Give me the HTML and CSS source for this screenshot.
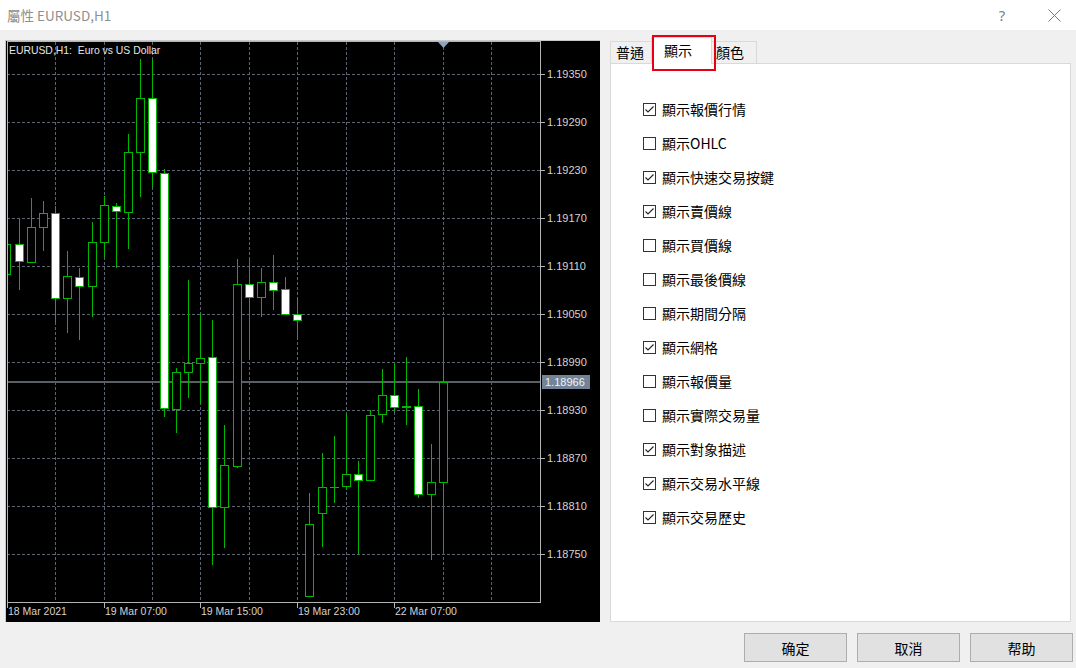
FILE: index.html
```html
<!DOCTYPE html>
<html>
<head>
<meta charset="utf-8">
<title>屬性 EURUSD,H1</title>
<link rel="stylesheet" href="styles.css">
</head>
<body>
<div class="window">
  <div class="titlebar">
    <span class="title">屬性 EURUSD,H1</span>
    <span class="tb-help">?</span>
    <span class="tb-close"><svg width="13" height="13" viewBox="0 0 13 13"><path d="M0.5 0.5L12.5 12.5M12.5 0.5L0.5 12.5" stroke="#777" stroke-width="1" fill="none"/></svg></span>
  </div>
  <div class="content">
    <div class="chart">
      <svg class="chart-svg" width="594" height="581" viewBox="6 41 594 581">
        <defs>
          <clipPath id="plot"><rect x="7" y="41" width="534" height="562"/></clipPath>
        </defs>
        <rect x="6" y="41" width="594" height="581" fill="#000"/>
        <g class="grid">
          <line x1="7" y1="74.5" x2="541" y2="74.5"/>
          <line x1="7" y1="122.5" x2="541" y2="122.5"/>
          <line x1="7" y1="170.5" x2="541" y2="170.5"/>
          <line x1="7" y1="218.5" x2="541" y2="218.5"/>
          <line x1="7" y1="266.5" x2="541" y2="266.5"/>
          <line x1="7" y1="314.5" x2="541" y2="314.5"/>
          <line x1="7" y1="362.5" x2="541" y2="362.5"/>
          <line x1="7" y1="410.5" x2="541" y2="410.5"/>
          <line x1="7" y1="458.5" x2="541" y2="458.5"/>
          <line x1="7" y1="506.5" x2="541" y2="506.5"/>
          <line x1="7" y1="554.5" x2="541" y2="554.5"/>
          <line x1="55.5" y1="42" x2="55.5" y2="603"/>
          <line x1="104.5" y1="42" x2="104.5" y2="603"/>
          <line x1="152.5" y1="42" x2="152.5" y2="603"/>
          <line x1="200.5" y1="42" x2="200.5" y2="603"/>
          <line x1="249.5" y1="42" x2="249.5" y2="603"/>
          <line x1="297.5" y1="42" x2="297.5" y2="603"/>
          <line x1="346.5" y1="42" x2="346.5" y2="603"/>
          <line x1="394.5" y1="42" x2="394.5" y2="603"/>
          <line x1="443.5" y1="42" x2="443.5" y2="603"/>
          <line x1="491.5" y1="42" x2="491.5" y2="603"/>
        </g>
        <rect class="curline" x="7" y="381" width="534" height="2"/>
        <g class="candles" clip-path="url(#plot)">
          <line x1="6.5" y1="216" x2="6.5" y2="274"/><rect class="h" x="2.5" y="244.5" width="8" height="30"/>
          <line x1="19.5" y1="219" x2="19.5" y2="290"/><rect class="w" x="15.5" y="244.5" width="8" height="17"/>
          <line x1="31.5" y1="198" x2="31.5" y2="263"/><rect class="h" x="27.5" y="227.5" width="8" height="35"/>
          <line x1="43.5" y1="201" x2="43.5" y2="251"/><rect class="h" x="39.5" y="213.5" width="8" height="14"/>
          <line x1="55.5" y1="206" x2="55.5" y2="322"/><rect class="w" x="51.5" y="213.5" width="8" height="85"/>
          <line x1="67.5" y1="251" x2="67.5" y2="333"/><rect class="h" x="63.5" y="276.5" width="8" height="22"/>
          <line x1="79.5" y1="268" x2="79.5" y2="340"/><rect class="w" x="75.5" y="277.5" width="8" height="9"/>
          <line x1="92.5" y1="222" x2="92.5" y2="317"/><rect class="h" x="88.5" y="242.5" width="8" height="44"/>
          <line x1="104.5" y1="196" x2="104.5" y2="257"/><rect class="h" x="100.5" y="205.5" width="8" height="37"/>
          <line x1="116.5" y1="203" x2="116.5" y2="268"/><rect class="w" x="112.5" y="206.5" width="8" height="5"/>
          <line x1="128.5" y1="134" x2="128.5" y2="249"/><rect class="h" x="124.5" y="152.5" width="8" height="60"/>
          <line x1="140.5" y1="59" x2="140.5" y2="197"/><rect class="h" x="136.5" y="98.5" width="8" height="54"/>
          <line x1="152.5" y1="59" x2="152.5" y2="188"/><rect class="w" x="148.5" y="98.5" width="8" height="74"/>
          <line x1="164.5" y1="169" x2="164.5" y2="417"/><rect class="w" x="160.5" y="173.5" width="8" height="235"/>
          <line x1="176.5" y1="368" x2="176.5" y2="433"/><rect class="h" x="172.5" y="372.5" width="8" height="37"/>
          <line x1="188.5" y1="280" x2="188.5" y2="398"/><rect class="h" x="184.5" y="363.5" width="8" height="9"/>
          <line x1="200.5" y1="313" x2="200.5" y2="404"/><rect class="h" x="196.5" y="358.5" width="8" height="5"/>
          <line x1="212.5" y1="320" x2="212.5" y2="565"/><rect class="w" x="208.5" y="357.5" width="8" height="150"/>
          <line x1="224.5" y1="425" x2="224.5" y2="548"/><rect class="h" x="220.5" y="465.5" width="8" height="42"/>
          <line x1="237.5" y1="259" x2="237.5" y2="468"/><rect class="h" x="233.5" y="284.5" width="8" height="182"/>
          <line x1="249.5" y1="260" x2="249.5" y2="357"/><rect class="w" x="245.5" y="284.5" width="8" height="13"/>
          <line x1="261.5" y1="268" x2="261.5" y2="317"/><rect class="h" x="257.5" y="282.5" width="8" height="15"/>
          <line x1="273.5" y1="255" x2="273.5" y2="310"/><rect class="w" x="269.5" y="282.5" width="8" height="8"/>
          <line x1="285.5" y1="277" x2="285.5" y2="314"/><rect class="w" x="281.5" y="289.5" width="8" height="25"/>
          <line x1="297.5" y1="297" x2="297.5" y2="340"/><rect class="w" x="293.5" y="314.5" width="8" height="6"/>
          <line x1="309.5" y1="493" x2="309.5" y2="596"/><rect class="h" x="305.5" y="524.5" width="8" height="72"/>
          <line x1="322.5" y1="453" x2="322.5" y2="547"/><rect class="h" x="318.5" y="487.5" width="8" height="26"/>
          <line x1="334.5" y1="436" x2="334.5" y2="503"/><line x1="330" y1="487.5" x2="339" y2="487.5"/>
          <line x1="346.5" y1="414" x2="346.5" y2="490"/><rect class="h" x="342.5" y="474.5" width="8" height="12"/>
          <line x1="358.5" y1="461" x2="358.5" y2="554"/><rect class="w" x="354.5" y="474.5" width="8" height="6"/>
          <line x1="370.5" y1="410" x2="370.5" y2="481"/><rect class="h" x="366.5" y="415.5" width="8" height="65"/>
          <line x1="382.5" y1="369" x2="382.5" y2="423"/><rect class="h" x="378.5" y="395.5" width="8" height="19"/>
          <line x1="394.5" y1="364" x2="394.5" y2="412"/><rect class="w" x="390.5" y="395.5" width="8" height="12"/>
          <line x1="406.5" y1="357" x2="406.5" y2="425"/><rect class="h" x="402.5" y="406.5" width="8" height="1"/>
          <line x1="418.5" y1="389" x2="418.5" y2="498"/><rect class="w" x="414.5" y="406.5" width="8" height="88"/>
          <line x1="431.5" y1="444" x2="431.5" y2="560"/><rect class="h" x="427.5" y="482.5" width="8" height="12"/>
          <line x1="443.5" y1="318" x2="443.5" y2="552"/><rect class="h" x="439.5" y="382.5" width="8" height="100"/>
        </g>
        <rect class="frame" x="7.5" y="41.5" width="533" height="561"/>
        <g class="ticks">
          <line x1="541" y1="74.5" x2="545" y2="74.5"/>
          <line x1="541" y1="122.5" x2="545" y2="122.5"/>
          <line x1="541" y1="170.5" x2="545" y2="170.5"/>
          <line x1="541" y1="218.5" x2="545" y2="218.5"/>
          <line x1="541" y1="266.5" x2="545" y2="266.5"/>
          <line x1="541" y1="314.5" x2="545" y2="314.5"/>
          <line x1="541" y1="362.5" x2="545" y2="362.5"/>
          <line x1="541" y1="410.5" x2="545" y2="410.5"/>
          <line x1="541" y1="458.5" x2="545" y2="458.5"/>
          <line x1="541" y1="506.5" x2="545" y2="506.5"/>
          <line x1="541" y1="554.5" x2="545" y2="554.5"/>
          <line x1="7.5" y1="603" x2="7.5" y2="608"/>
          <line x1="104.5" y1="603" x2="104.5" y2="608"/>
          <line x1="200.5" y1="603" x2="200.5" y2="608"/>
          <line x1="297.5" y1="603" x2="297.5" y2="608"/>
          <line x1="394.5" y1="603" x2="394.5" y2="608"/>
        </g>
        <polygon class="marker" points="438,42 449,42 443.5,48"/>
        <text class="symbol" x="9" y="54">EURUSD,H1:  Euro vs US Dollar</text>
        <g class="prices">
          <text x="547" y="78">1.19350</text>
          <text x="547" y="126">1.19290</text>
          <text x="547" y="174">1.19230</text>
          <text x="547" y="222">1.19170</text>
          <text x="547" y="270">1.19110</text>
          <text x="547" y="318">1.19050</text>
          <text x="547" y="366">1.18990</text>
          <text x="547" y="414">1.18930</text>
          <text x="547" y="462">1.18870</text>
          <text x="547" y="510">1.18810</text>
          <text x="547" y="558">1.18750</text>
        </g>
        <rect class="curbox" x="542" y="375" width="48" height="14"/>
        <text class="curtext" x="545" y="386">1.18966</text>
        <g class="times">
          <text x="8" y="615">18 Mar 2021</text>
          <text x="105" y="615">19 Mar 07:00</text>
          <text x="201" y="615">19 Mar 15:00</text>
          <text x="298" y="615">19 Mar 23:00</text>
          <text x="395" y="615">22 Mar 07:00</text>
        </g>
      </svg>
    </div>
    <div class="props">
      <div class="tabs">
        <div class="tab">普通</div>
        <div class="tab active">顯示</div>
        <div class="tab">顏色</div>
      </div>
      <div class="panel">
        <div class="row"><span class="cb checked"><svg width="11" height="11" viewBox="0 0 11 11"><polyline points="1.5,5.5 4,8 9.5,2.5" fill="none" stroke="#222" stroke-width="1.1"/></svg></span>顯示報價行情</div>
        <div class="row"><span class="cb"></span>顯示OHLC</div>
        <div class="row"><span class="cb checked"><svg width="11" height="11" viewBox="0 0 11 11"><polyline points="1.5,5.5 4,8 9.5,2.5" fill="none" stroke="#222" stroke-width="1.1"/></svg></span>顯示快速交易按鍵</div>
        <div class="row"><span class="cb checked"><svg width="11" height="11" viewBox="0 0 11 11"><polyline points="1.5,5.5 4,8 9.5,2.5" fill="none" stroke="#222" stroke-width="1.1"/></svg></span>顯示賣價線</div>
        <div class="row"><span class="cb"></span>顯示買價線</div>
        <div class="row"><span class="cb"></span>顯示最後價線</div>
        <div class="row"><span class="cb"></span>顯示期間分隔</div>
        <div class="row"><span class="cb checked"><svg width="11" height="11" viewBox="0 0 11 11"><polyline points="1.5,5.5 4,8 9.5,2.5" fill="none" stroke="#222" stroke-width="1.1"/></svg></span>顯示網格</div>
        <div class="row"><span class="cb"></span>顯示報價量</div>
        <div class="row"><span class="cb"></span>顯示實際交易量</div>
        <div class="row"><span class="cb checked"><svg width="11" height="11" viewBox="0 0 11 11"><polyline points="1.5,5.5 4,8 9.5,2.5" fill="none" stroke="#222" stroke-width="1.1"/></svg></span>顯示對象描述</div>
        <div class="row"><span class="cb checked"><svg width="11" height="11" viewBox="0 0 11 11"><polyline points="1.5,5.5 4,8 9.5,2.5" fill="none" stroke="#222" stroke-width="1.1"/></svg></span>顯示交易水平線</div>
        <div class="row"><span class="cb checked"><svg width="11" height="11" viewBox="0 0 11 11"><polyline points="1.5,5.5 4,8 9.5,2.5" fill="none" stroke="#222" stroke-width="1.1"/></svg></span>顯示交易歷史</div>
      </div>
    </div>
  </div>
  <div class="buttons">
    <div class="btn">确定</div>
    <div class="btn">取消</div>
    <div class="btn">帮助</div>
  </div>
</div>
</body>
</html>
```

FILE: styles.css
```css
* { box-sizing: border-box; }
html, body {
  margin: 0;
  padding: 0;
  width: 1076px;
  height: 668px;
  overflow: hidden;
  background: #f0f0f0;
  font-family: "Noto Sans CJK TC", "Noto Sans", sans-serif;
}
.window {
  width: 1076px;
  height: 668px;
  display: flex;
  flex-direction: column;
}
.titlebar {
  height: 30px;
  background: #fff;
  display: flex;
  align-items: center;
  padding-left: 7px;
}
.title {
  font-family: "Noto Sans CJK TC", sans-serif;
  font-size: 13.5px;
  color: #8f8f8f;
  flex: 1;
}
.tb-help {
  font-family: "Noto Sans", sans-serif;
  font-size: 15px;
  color: #808080;
  width: 14px;
  margin-right: 39px;
  text-align: center;
}
.tb-close {
  display: flex;
  width: 13px;
  height: 13px;
  margin-right: 15px;
}
.content {
  display: flex;
  margin-top: 10px;
  padding-left: 5px;
  gap: 10px;
}
.chart {
  width: 595px;
  height: 582px;
  border-top: 1px solid #c8c8c8;
  border-left: 1px solid #c8c8c8;
  background: #000;
}
.chart-svg { display: block; }
.grid line {
  stroke: #5a6472;
  stroke-width: 1;
  stroke-dasharray: 3 2;
}
.curline { fill: #5a5f66; }
.candles line { stroke: #00b800; stroke-width: 1; }
.candles rect { stroke: #00b800; stroke-width: 1; }
.candles rect.h { fill: #000; }
.candles rect.w { fill: #fff; }
.frame { fill: none; stroke: #b4b4b4; stroke-width: 1; }
.ticks line { stroke: #b4b4b4; stroke-width: 1; }
.marker { fill: #8ea4ba; }
.symbol {
  font-family: "Liberation Sans", sans-serif;
  font-size: 10.4px;
  fill: #e6e6e6;
  white-space: pre;
}
.prices text {
  font-family: "Liberation Sans", sans-serif;
  font-size: 11px;
  fill: #d4d4d4;
}
.times text {
  font-family: "Liberation Sans", sans-serif;
  font-size: 10.5px;
  fill: #d4d4d4;
}
.curbox { fill: #728397; }
.curtext {
  font-family: "Liberation Sans", sans-serif;
  font-size: 11px;
  fill: #eef2f6;
}
.props {
  width: 461px;
  display: flex;
  flex-direction: column;
}
.tabs {
  display: flex;
  height: 23px;
  align-items: flex-end;
  position: relative;
  z-index: 1;
}
.tab {
  height: 22px;
  padding: 0 6px;
  border: 1px solid #d9d9d9;
  border-bottom: none;
  background: #f0f0f0;
  font-size: 14px;
  line-height: 20px;
  color: #000;
}
.tab:first-child { width: 42px; padding-left: 5px; }
.tab + .tab { margin-left: -1px; }
.tab.active {
  width: 61px;
  height: 27px;
  margin-bottom: -1px;
  background: #fff;
  padding-left: 12px;
  line-height: 24px;
  position: relative;
  z-index: 2;
}
.tab.active::after {
  content: "";
  position: absolute;
  left: 0;
  top: -3px;
  width: 60px;
  height: 32px;
  border: 2px solid #e60012;
}
.tab:last-child { width: 46px; padding-left: 4px; }
.panel {
  height: 559px;
  background: #fff;
  border: 1px solid #d9d9d9;
  padding: 28px 0 0 32px;
}
.row {
  height: 34px;
  display: flex;
  align-items: center;
  font-size: 14px;
  color: #000;
}
.cb {
  width: 13px;
  height: 13px;
  border: 1px solid #333;
  background: #fff;
  margin-right: 6px;
  display: flex;
  align-items: center;
  justify-content: center;
  flex: none;
}
.cb svg { display: block; }
.buttons {
  display: flex;
  justify-content: flex-end;
  gap: 10px;
  margin-top: 11px;
  padding-right: 3px;
}
.btn {
  width: 103px;
  height: 29px;
  border: 1px solid #adadad;
  background: #e1e1e1;
  font-family: "Noto Sans CJK SC", sans-serif;
  font-size: 14px;
  display: flex;
  align-items: center;
  justify-content: center;
  color: #000;
}
```
